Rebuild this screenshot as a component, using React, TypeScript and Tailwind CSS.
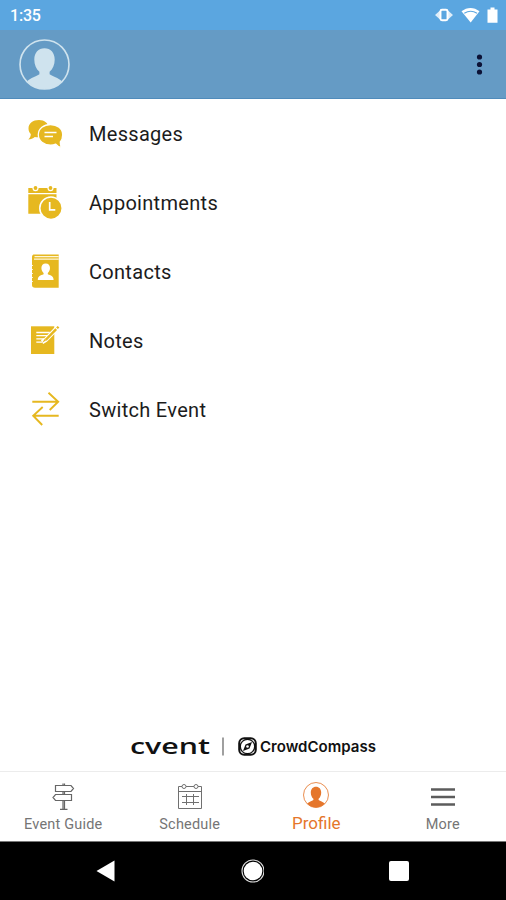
import type { ReactNode } from "react";

const GOLD = "#e6b820";

function MessagesIcon() {
  return (
    <svg width="37" height="37" viewBox="0 0 37 37" fill={GOLD}>
      <path d="M12 5C6 5 1.500 8.200 1.500 13.500c0 2.500 1 4.300 2.300 5.500C3.800 21 3 23 1.300 24.500c2.500-.1 4.800-1 6.500-2.500 1.300.3 2.600.4 4.200.3C18 22 21.500 18 21.500 13S17.500 5 12 5Z" />
      <path
        d="M23.500 9.500c-6.700 0-12.200 4.200-12.200 10.300s5.500 10.300 12.200 10.300c1.900 0 3.700-.3 5.200-.9 1.400 1.900 3.500 3 6 3.400-1.200-1.700-1.500-3.700-1.400-5.600 1.600-1.800 2.400-4.200 2.400-7.200 0-6.100-5.500-10.300-12.200-10.300Z"
        stroke="#fff"
        strokeWidth="1.300"
      />
      <path d="M17.500 17.500h12M17.500 21.500h8.500" stroke="#fff" strokeWidth="1.500" />
    </svg>
  );
}

function AppointmentsIcon() {
  return (
    <svg width="37" height="37" viewBox="0 0 37 37" fill={GOLD}>
      <path d="M1.300 4h28.200v5H1.300zM1.300 10.200h28.200v19.600H1.300z" />
      <circle cx="8.500" cy="4.200" r="3" fill="#fff" />
      <circle cx="23.500" cy="4.200" r="3" fill="#fff" />
      <circle cx="8.500" cy="4" r="1.900" />
      <circle cx="23.500" cy="4" r="1.900" />
      <circle cx="24" cy="24.200" r="11.200" stroke="#fff" strokeWidth="1.500" />
      <path d="M22.700 18V25.800h5.600" fill="none" stroke="#fff" strokeWidth="1.700" />
    </svg>
  );
}

function ContactsIcon() {
  return (
    <svg width="37" height="37" viewBox="0 0 37 37" fill={GOLD}>
      <path d="M7 1.500h24.700v33.200H8c-2 0-3-1-3-2.700V4c0-1.500.7-2.500 2-2.500Z" />
      <path d="M7.500 3.700h24.200M7 6.100h24.700" stroke="#fff6d8" strokeWidth="1.200" />
      <path d="M4 12.500h2M4 16.500h2M4 20.500h2M4 24.500h2M4 28.500h2" stroke="#fff" strokeWidth=".8" />
      <path
        d="M18.700 10.500c-2.800 0-4.300 1.900-4.300 4.600 0 2 .9 3.800 2.200 4.800v1.400c-3 1.200-5.800 1.700-5.800 5.600h15.800c0-3.900-2.800-4.400-5.800-5.600v-1.400c1.300-1 2.200-2.800 2.200-4.800 0-2.700-1.500-4.600-4.300-4.600Z"
        fill="#fff"
      />
    </svg>
  );
}

function NotesIcon() {
  return (
    <svg width="37" height="37" viewBox="0 0 37 37" fill="none">
      <path d="M4 4.300h23.300V32H4z" fill={GOLD} />
      <path d="M9.300 10.500h13.500M9.300 13.700h11M9.300 16.900h8M9.300 20.200h6" stroke="#fff" strokeWidth="1.300" />
      <path d="m31.500 4.700-13 13.300-3.500 2" stroke="#fff" strokeWidth="4.600" />
      <path d="m31.500 4.700-1.500 1.600" stroke={GOLD} strokeWidth="2.400" />
      <path d="m29.200 7.200-10.500 10.600" stroke={GOLD} strokeWidth="2.400" />
      <path d="m17.800 16.800-2.600 4 4-2.500Z" fill={GOLD} />
    </svg>
  );
}

function SwitchIcon() {
  return (
    <svg width="37" height="37" viewBox="0 0 37 37" fill="none" stroke={GOLD} strokeWidth="1.900">
      <path d="M5.300 10.700h26M21.500 1.800l9.700 8.900-8.500 8.300" />
      <path d="M31.700 24.700h-26M15.700 16l-9.500 8.700 9 9.300" />
    </svg>
  );
}

function PersonIcon({ size, color, ring }: { size: number; color: string; ring: number }) {
  return (
    <svg width={size} height={size} viewBox="0 0 50 50" fill={color}>
      <circle cx="25" cy="25" r="24" fill="none" stroke={color} strokeWidth={ring} />
      <path d="M25 9c-6 0-10 4.500-10 11 0 5 1.800 9.500 5 12.200v2.300C17 37 11.500 37.500 8 41.500c4.500 5 10.500 7.500 17 7.500s12.500-2.500 17-7.500c-3.500-4-9-4.500-12-7v-2.300c3.200-2.700 5-7.200 5-12.200C35 13.500 31 9 25 9Z" />
    </svg>
  );
}

function SignpostIcon() {
  return (
    <svg width="26" height="28" viewBox="-.5 0 26 28" fill="none" stroke="#666" strokeWidth="1.200">
      <path d="M5 2.500h15.500l2.500 3-2.500 3H5zM21 11.500H5l-2.500 3 2.500 3h16z" />
      <path d="M12.500.5v2M14 .5v2M12.500 8.500v3M14 8.500v3M12.500 17.500V26M14 17.500V26M9.500 26.300h7.500" />
    </svg>
  );
}

function ScheduleIcon() {
  return (
    <svg width="26" height="28" viewBox="0 0 26 28" fill="none" stroke="#707070" strokeWidth="1">
      <path d="M5 3.500H1.500v22h23v-22H21M9 3.500h8M1.500 8.500h23" />
      <circle cx="7" cy="3.500" r="2" />
      <circle cx="19" cy="3.500" r="2" />
      <path d="M5 13.500h17M5 19.500h17M9.500 11v11M16.500 11v11" />
    </svg>
  );
}

function MenuIcon() {
  return (
    <svg width="26" height="28" viewBox="0 0 26 28" stroke="#5c5c5c" strokeWidth="2.400">
      <path d="M1 6.500h24M1 14h24M1 21.500h24" />
    </svg>
  );
}

const menu: { label: string; icon: ReactNode }[] = [
  { label: "Messages", icon: <MessagesIcon /> },
  { label: "Appointments", icon: <AppointmentsIcon /> },
  { label: "Contacts", icon: <ContactsIcon /> },
  { label: "Notes", icon: <NotesIcon /> },
  { label: "Switch Event", icon: <SwitchIcon /> },
];

const tabs: { label: string; icon: ReactNode }[] = [
  { label: "Event Guide", icon: <SignpostIcon /> },
  { label: "Schedule", icon: <ScheduleIcon /> },
  { label: "Profile", icon: <PersonIcon size={26} color="#e5762b" ring={1.6} /> },
  { label: "More", icon: <MenuIcon /> },
];

function StatusBar() {
  return (
    <div className="flex h-[30px] items-center justify-between bg-[#5ba6e0] pl-[10px] pr-[8px] pt-[2px] text-white">
      <span className="text-[16px] font-medium leading-none tracking-[-0.2px]">1:35</span>
      <svg width="64" height="18" viewBox="0 0 64 18" fill="#fff">
        <path d="M6 3.500 1 8l5 4.500zM14 3.500 19 8l-5 4.500z" fillOpacity=".8" />
        <rect x="6.500" y="2.700" width="7" height="10.600" rx="1.500" fill="none" stroke="#fff" strokeWidth="1.900" />
        <path d="M27.500 4.300c5.500-4.500 12.500-4.500 18 0L36.700 15.500z" />
        <path d="M30.300 6.300c4-2.600 8.700-2.600 12.700 0" fill="none" stroke="#5ba6e0" strokeWidth="1.100" />
        <path d="M56.500 .5h4v2h3v13.300h-10V2.500h3z" />
      </svg>
    </div>
  );
}

function Brands() {
  return (
    <div className="flex h-[48px] items-center justify-center">
      <svg width="270" height="44" viewBox="-10 -9 270 44" fill="#111">
        <text x="2" y="20" fontFamily="'Open Sans', sans-serif" fontWeight="600" fontSize="22" textLength="80" lengthAdjust="spacingAndGlyphs">
          cvent
        </text>
        <path d="M95 3.500v18" stroke="#777" strokeWidth="1.400" />
        <rect x="111.200" y="4.200" width="16.600" height="16.600" rx="5" fill="none" stroke="#111" strokeWidth="2" />
        <circle cx="119.500" cy="12.500" r="7.200" fill="none" stroke="#111" strokeWidth="1.300" />
        <path d="m124 8-2.500 6.500-6.500 2.500 2.500-6.500z" />
        <circle cx="119.500" cy="12.500" r="1.300" fill="#fff" />
        <text x="132" y="18" fontFamily="Inter, sans-serif" fontWeight="600" fontSize="15" textLength="116" lengthAdjust="spacingAndGlyphs">
          CrowdCompass
        </text>
      </svg>
    </div>
  );
}

export default function App() {
  return (
    <div className="flex h-[900px] w-[506px] flex-col bg-white font-[Roboto,sans-serif]">
      <StatusBar />
      <header className="flex h-[69px] items-center justify-between border-b border-[#4f8bbb] bg-[#659bc5] pl-[19px] pr-[23px]">
        <PersonIcon size={51} color="#cfe3ee" ring={1.6} />
        <svg width="7" height="22" viewBox="0 0 7 22" fill="#0c1236">
          <circle cx="3.500" cy="4" r="2.600" />
          <circle cx="3.500" cy="11.500" r="2.600" />
          <circle cx="3.500" cy="19" r="2.600" />
        </svg>
      </header>

      <main className="flex-1">
        {menu.map((item) => (
          <div key={item.label} className="flex h-[69px] items-center gap-[25px] pl-[27px]">
            {item.icon}
            <span className="text-[20px] leading-6 tracking-[0.3px] text-[#1c1c1c]">{item.label}</span>
          </div>
        ))}
      </main>

      <Brands />

      <nav className="grid h-[71px] grid-cols-4 border-b border-t border-b-[#777] border-t-[#ececec]">
        {tabs.map((tab) => {
          const active = tab.label === "Profile";
          return (
            <div
              key={tab.label}
              className={`flex flex-col items-center ${active ? "pt-[10px] text-[#e5762b]" : "pt-[11px] text-[#757575]"}`}
            >
              {tab.icon}
              <span className={active ? "mt-[5px] text-[17px] leading-5" : "mt-[4px] text-[14.5px] leading-5 tracking-[0.2px]"}>
                {tab.label}
              </span>
            </div>
          );
        })}
      </nav>

      {/* Android system buttons */}
      <div className="flex h-[58px] items-center justify-between bg-black pl-[96px] pr-[97px]">
        <svg width="19" height="22" viewBox="0 0 19 22" fill="#fff">
          <path d="M18.500.5v21L.5 11z" />
        </svg>
        <svg width="24" height="24" viewBox="-.5 0 24 24" fill="#fff">
          <circle cx="12.500" cy="12" r="9.300" />
          <circle cx="12.500" cy="12" r="11" fill="none" stroke="#ddd" strokeWidth="1.100" />
        </svg>
        <div className="h-[20px] w-[20px] rounded-[2px] bg-white" />
      </div>
    </div>
  );
}
